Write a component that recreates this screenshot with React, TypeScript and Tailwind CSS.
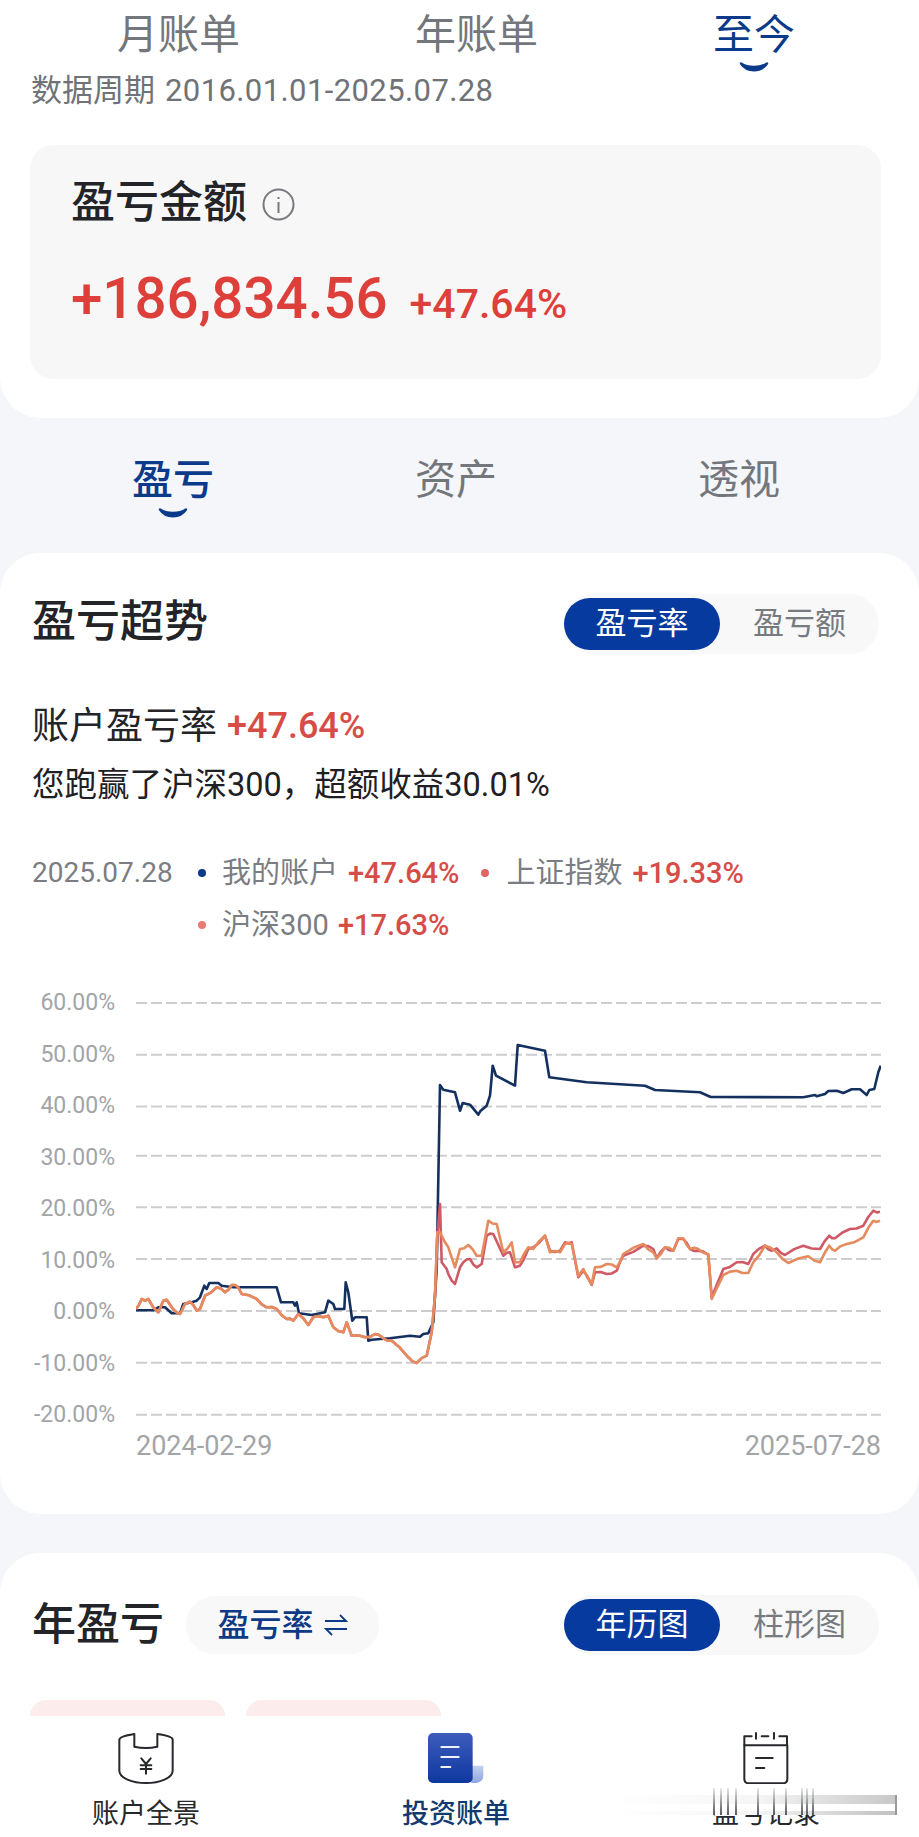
import React from 'react';

type Pt = [number, number];

// traced off the reference, left half and right half of the chart
const toLeft = (p: Pt[]): Pt[] => p.map(([x, y]) => [x / 3, 970 + y / 3]);
const toRight = (p: Pt[]): Pt[] => p.map(([x, y]) => [460 + x / 3, 970 + y / 3]);

const blue: Pt[] = [
    ...toLeft([[408, 1024], [460, 1024], [475, 1015], [495, 1015], [515, 1033], [540, 1033], [550, 1005], [575, 1000], [590, 995], [600, 985], [613, 950], [620, 960], [628, 942], [655, 942], [665, 950], [700, 955], [830, 955], [843, 1000], [880, 1000], [885, 1010], [890, 1000], [897, 1033], [935, 1038], [975, 1030], [985, 995], [1000, 1005], [1005, 1020], [1033, 1020], [1037, 940], [1045, 970], [1057, 1055], [1065, 1045], [1100, 1045], [1105, 1115], [1115, 1112], [1170, 1108], [1230, 1100], [1260, 1103], [1270, 1095], [1285, 1093], [1300, 1060], [1310, 900], [1320, 348], [1330, 362], [1365, 370], [1380, 425]]),
    ...toRight([[8, 402], [30, 407], [55, 437], [62, 425], [80, 410], [90, 380], [98, 290], [108, 320], [165, 350], [173, 228], [255, 245], [268, 325], [380, 340], [555, 350], [585, 363], [720, 370], [752, 384], [1030, 385], [1065, 378], [1070, 382], [1095, 375], [1105, 366], [1130, 365], [1150, 372], [1175, 361], [1200, 361], [1220, 378], [1228, 363], [1243, 360], [1255, 310], [1262, 290]]),
];

const sharedLeft: Pt[] = [[408, 1020], [425, 990], [435, 995], [445, 990], [460, 1015], [475, 1030], [490, 995], [500, 992], [515, 1015], [540, 1035], [555, 1005], [570, 998], [590, 1025], [600, 1020], [615, 980], [650, 955], [675, 970], [695, 948], [715, 955], [725, 975], [770, 990], [800, 1015], [830, 1020], [860, 1050], [880, 1055], [895, 1035], [925, 1068], [940, 1045], [970, 1045], [985, 1040], [1000, 1075], [1030, 1090], [1040, 1060], [1055, 1100], [1095, 1105], [1125, 1095], [1150, 1108], [1175, 1115], [1225, 1165], [1250, 1182], [1280, 1160], [1295, 1090], [1305, 980]];

const red: Pt[] = [
    ...toLeft([...sharedLeft, [1312, 800], [1320, 705], [1325, 880], [1340, 900], [1345, 915], [1355, 935], [1365, 945], [1380, 895]]),
    ...toRight([[10, 880], [30, 870], [50, 895], [65, 885], [80, 800], [100, 795], [130, 860], [150, 850], [165, 895], [180, 890], [205, 840], [220, 835], [255, 800], [270, 845], [300, 845], [315, 820], [335, 820], [355, 925], [370, 905], [395, 948], [405, 910], [440, 915], [470, 905], [490, 860], [550, 830], [580, 840], [590, 868], [615, 835], [640, 845], [655, 810], [670, 810], [690, 840], [715, 845], [745, 858], [755, 985], [790, 900], [830, 880], [865, 885], [880, 855], [915, 830], [935, 845], [950, 838], [975, 858], [1030, 830], [1080, 840], [1108, 800], [1125, 808], [1170, 780], [1210, 770], [1240, 725], [1260, 728]]),
];

const orange: Pt[] = [
    ...toLeft([...sharedLeft, [1312, 790], [1320, 790], [1335, 820], [1345, 835], [1365, 895], [1380, 840]]),
    ...toRight([[25, 828], [50, 860], [65, 860], [85, 755], [110, 765], [130, 850], [155, 820], [165, 880], [180, 880], [205, 835], [220, 840], [255, 800], [270, 850], [300, 850], [315, 825], [335, 825], [355, 920], [370, 900], [395, 945], [405, 895], [440, 885], [470, 895], [490, 855], [550, 825], [580, 850], [590, 868], [615, 835], [640, 845], [655, 808], [670, 808], [690, 840], [715, 840], [745, 855], [755, 990], [790, 918], [830, 905], [865, 912], [880, 880], [915, 830], [950, 850], [985, 882], [1045, 862], [1080, 880], [1108, 830], [1125, 845], [1160, 825], [1210, 805], [1240, 755], [1260, 755]]),
];

// small wobble between traced points so the index lines look like daily data
function rough(points: Pt[], amp: number): Pt[] {
    const out: Pt[] = [];
    points.forEach((p, i) => {
        out.push(p);
        const next = points[i + 1];
        if (next && next[0] - p[0] > 5 && Math.abs(next[1] - p[1]) < 20) {
            const o = i % 2 === 0 ? amp : -amp;
            out.push([(p[0] + next[0]) / 2, (p[1] + next[1]) / 2 + o]);
        }
    });
    return out;
}

const toPath = (points: Pt[]) => points.map(([x, y], i) => `${i ? 'L' : 'M'}${x.toFixed(1)} ${y.toFixed(1)}`).join(' ');

const gridYs = [1004, 1055.7, 1107.5, 1156.7, 1208.3, 1260, 1312, 1363.7, 1415.7];
const yLabels = ['60.00%', '50.00%', '40.00%', '30.00%', '20.00%', '10.00%', '0.00%', '-10.00%', '-20.00%'];

function Smile({ className }: { className: string }) {
    return (
        <svg className={className} width="30" height="12" viewBox="0 0 30 12" fill="none">
            <path d="M2 2.5C8 11.5 22 11.5 28 2.5C21 7 9 7 2 2.5Z" fill="#0b3a8a" stroke="#0b3a8a" strokeWidth="2.4" strokeLinejoin="round" />
        </svg>
    );
}

function Segment({ active, other }: { active: string; other: string }) {
    return (
        <div className="flex items-center w-[315px] h-[60px] rounded-full bg-[#f8f8f9]">
            <div className="w-[156px] h-[52px] rounded-full bg-[#063a9f] text-white text-[31px] flex items-center justify-center">
                {active}
            </div>
            <div className="flex-1 text-center text-[#777a7e] text-[31px]">{other}</div>
        </div>
    );
}

function Chart() {
    return (
        <div className="px-[32px] mt-[34px]">
            <div className="flex">
                <div className="w-[83px] h-[448px] flex flex-col justify-between items-end text-[23px] leading-[36px] text-[#a3a4a6]">
                    {yLabels.map((l) => (
                        <div key={l} className="whitespace-nowrap">{l}</div>
                    ))}
                </div>
                <svg className="ml-[21px] shrink-0" width="745" height="448" viewBox="136 986 745 448" fill="none">
                    {gridYs.map((y) => (
                        <line key={y} x1="136" x2="881" y1={y} y2={y} stroke="#cdcdcf" strokeWidth="2" strokeDasharray="11 4" />
                    ))}
                    <path d={toPath(blue)} stroke="#14305f" strokeWidth="2.6" strokeLinejoin="round" />
                    <path d={toPath(rough(red, 1.2))} stroke="#cf5a66" strokeWidth="2.6" strokeLinejoin="round" />
                    <path d={toPath(rough(orange, 1.2))} stroke="#e58b5e" strokeWidth="2.6" strokeLinejoin="round" />
                </svg>
            </div>
            <div className="flex justify-between pl-[104px] pr-[6px] h-[26px] text-[27px] leading-[26px] text-[#a3a4a6]">
                <span>2024-02-29</span>
                <span>2025-07-28</span>
            </div>
        </div>
    );
}

function WalletIcon() {
    return (
        <svg width="56" height="51" viewBox="0 0 168 153" fill="none" stroke="#26282c" strokeWidth="6" strokeLinejoin="round" strokeLinecap="round">
            <path d="M4 20C4 12 30 6 49 3V41C70 46 98 46 118 41V3C140 6 164 12 164 20V113C164 135 125 150 84 150C43 150 4 135 4 113Z" />
            <path d="M70 76L84 93L98 76M68 97H100M68 108H100M84 93V122" />
        </svg>
    );
}

function BillIcon() {
    return (
        <svg width="56" height="50" viewBox="0 0 168 150" fill="none">
            <defs>
                <linearGradient id="billFill" x1="0" y1="0" x2="0" y2="1">
                    <stop offset="0" stopColor="#3d5cbc" />
                    <stop offset="1" stopColor="#0e389f" />
                </linearGradient>
                <linearGradient id="foldFill" x1="0" y1="0" x2="0" y2="1">
                    <stop offset="0" stopColor="#c4d1f0" />
                    <stop offset="1" stopColor="#8ea5dd" />
                </linearGradient>
            </defs>
            <path d="M130 98H166V128C166 142 154 150 140 150H130Z" fill="url(#foldFill)" />
            <rect x="0" y="0" width="134" height="150" rx="15" fill="url(#billFill)" />
            <path d="M40 42H92M40 72H92M40 102H67" stroke="#eef2fb" strokeWidth="6" strokeLinecap="round" />
        </svg>
    );
}

function NoteIcon() {
    return (
        <svg width="46" height="52" viewBox="0 0 136 156" fill="none" stroke="#26282c" strokeWidth="6" strokeLinejoin="round" strokeLinecap="round">
            <path d="M3 40V13H25M38 3V20M55 13H75M92 3V20M108 13H131V40" />
            <path d="M3 40H132V140C132 149 126 154 118 154H17C9 154 3 149 3 140Z" />
            <path d="M38 78H88M38 108H63" />
        </svg>
    );
}

// the reference has a smeared capture artefact across the last tab label
const streaks = [713, 720, 727, 735, 757, 773, 785, 801, 806, 812];

function BottomNav() {
    const items = [
        { label: '账户全景', icon: <WalletIcon />, cls: 'text-[#26282c]' },
        { label: '投资账单', icon: <BillIcon />, cls: 'text-[#123a70] font-medium' },
        { label: '盈亏记录', icon: <NoteIcon />, cls: 'text-[#26282c]' },
    ];
    return (
        <div className="relative h-[121px] shrink-0 bg-white flex pl-[92px] gap-[202px] pt-[16px]">
            {items.map((it) => (
                <div key={it.label} className="w-[108px] flex flex-col items-center">
                    <div className="h-[52px] flex items-center">{it.icon}</div>
                    <div className={`mt-[13px] text-[27px] leading-[34px] whitespace-nowrap ${it.cls}`}>{it.label}</div>
                </div>
            ))}
            {/* smear over the third label */}
            <div className="absolute left-[610px] top-[74px] w-[290px] h-[23px] bg-white" />
            <div className="absolute left-[610px] top-[79px] w-[287px] h-[9px] bg-linear-to-r from-white via-[#f6f6f6] to-[#c8c8c8]" />
            <div className="absolute left-[610px] top-[95px] w-[287px] h-[4px] bg-linear-to-r from-white via-[#f6f6f6] to-[#c0c0c0]" />
            <div className="absolute left-[895px] top-[79px] w-[2px] h-[20px] bg-[#9a9a9a]" />
            {streaks.map((x) => (
                <div
                    key={x}
                    className="absolute top-[72px] w-[2px] h-[27px] bg-linear-to-b from-[#e8e8e8] to-[#55585c]"
                    style={{ left: x }}
                />
            ))}
        </div>
    );
}

export default function App() {
    return (
        <div className="w-[919px] h-[1837px] flex flex-col overflow-hidden bg-[#f4f6f9] text-[#222428] font-[family-name:Roboto,'Noto_Sans_CJK_SC',sans-serif]">
            <div className="flex-1 min-h-0 overflow-hidden">
                {/* Header */}
                <div className="h-[418px] bg-white rounded-b-[40px]">
                    <div className="h-[71px] flex items-center pl-[117px] gap-[175px] text-[41px] leading-none text-[#73777c]">
                        <span>月账单</span>
                        <span>年账单</span>
                        <span className="relative text-[#0b3a8a]">
                            至今
                            <Smile className="absolute left-[26px] top-[46px]" />
                        </span>
                    </div>
                    <div className="h-[40px] pl-[31px] flex items-center gap-[10px] text-[31px] text-[#6f7378]">
                        <span>数据周期</span>
                        <span className="tracking-[0.4px]">2016.01.01-2025.07.28</span>
                    </div>
                    <div className="mt-[34px] ml-[30px] w-[851px] h-[234px] rounded-[24px] bg-[#f7f7f8] pl-[41px] pt-[28px]">
                        <div className="flex items-center h-[60px]">
                            <span className="text-[44px] leading-none font-medium">盈亏金额</span>
                            <svg className="ml-[15px] mt-[2px]" width="33" height="33" viewBox="0 0 33 33" fill="none" stroke="#77797d" strokeWidth="2">
                                <circle cx="16.5" cy="16.5" r="15" />
                                <path d="M16.5 14V25M16.5 9V11" />
                            </svg>
                        </div>
                        <div className="flex items-baseline mt-[38px] gap-[22px] text-[#dd3f3a] leading-none font-medium">
                            <span className="text-[56.5px]">+186,834.56</span>
                            <span className="text-[41px]">+47.64%</span>
                        </div>
                    </div>
                </div>

                {/* Section tabs */}
                <div className="h-[135px] pb-[11px] flex items-center pl-[132px] gap-[201px] text-[41px] leading-none text-[#73777c]">
                    <span className="relative text-[#0b3a8a] font-medium">
                        盈亏
                        <Smile className="absolute left-[26px] top-[47px]" />
                    </span>
                    <span>资产</span>
                    <span>透视</span>
                </div>

                {/* Trend card */}
                <div className="h-[961px] bg-white rounded-[40px] pt-[41px]">
                    <div className="flex items-center justify-between pl-[32px] pr-[40px]">
                        <span className="text-[44px] leading-none font-medium mb-[4px]">盈亏超势</span>
                        <Segment active="盈亏率" other="盈亏额" />
                    </div>
                    <div className="px-[32px] mt-[47px] flex items-center h-[50px] gap-[10px] text-[37px] leading-none">
                        <span>账户盈亏率</span>
                        <span className="text-[36px] font-medium text-[#d64d48]">+47.64%</span>
                    </div>
                    <div className="px-[32px] mt-[9px] h-[50px] flex items-center text-[32.5px] leading-none text-[#1e2024]">
                        您跑赢了沪深300，超额收益30.01%
                    </div>
                    <div className="px-[32px] mt-[37px] flex text-[29px] leading-[52px] text-[#7a7d82]">
                        <span className="w-[148px] text-[28px]">2025.07.28</span>
                        <div className="flex flex-col">
                            <div className="flex items-center">
                                <span className="w-[8px] h-[8px] rounded-full bg-[#0b3a8a] mr-[16px] ml-[18px]" />
                                <span>我的账户</span>
                                <span className="ml-[10px] font-medium text-[#d64d48]">+47.64%</span>
                                <span className="w-[8px] h-[8px] rounded-full bg-[#e06666] ml-[22px] mr-[17px]" />
                                <span>上证指数</span>
                                <span className="ml-[10px] font-medium text-[#d64d48]">+19.33%</span>
                            </div>
                            <div className="flex items-center">
                                <span className="w-[8px] h-[8px] rounded-full bg-[#ea7b70] mr-[16px] ml-[18px]" />
                                <span>沪深300</span>
                                <span className="ml-[9px] font-medium text-[#d64d48]">+17.63%</span>
                            </div>
                        </div>
                    </div>
                    <Chart />
                </div>

                {/* Year card */}
                <div className="mt-[39px] h-[400px] bg-white rounded-t-[40px] pt-[42px]">
                    <div className="flex items-center pl-[32px] pr-[40px]">
                        <span className="text-[44px] leading-none font-medium">年盈亏</span>
                        <div className="ml-[22px] w-[193px] h-[58px] rounded-full bg-[#f8f8f9] flex items-center justify-center gap-[10px] text-[32px] text-[#0d3a85] font-medium">
                            <span>盈亏率</span>
                            <svg width="24" height="24" viewBox="0 0 24 24" fill="none" stroke="#0d3a85" strokeWidth="1.8">
                                <path d="M1 8H22L16 2M23 16H2L8 22" />
                            </svg>
                        </div>
                        <div className="ml-auto">
                            <Segment active="年历图" other="柱形图" />
                        </div>
                    </div>
                    <div className="mt-[45px] ml-[30px] flex gap-[21px]">
                        <div className="w-[195px] h-[100px] rounded-t-[16px] bg-[#fdecec]" />
                        <div className="w-[195px] h-[100px] rounded-t-[16px] bg-[#fdecec]" />
                    </div>
                </div>
            </div>
            <BottomNav />
        </div>
    );
}
